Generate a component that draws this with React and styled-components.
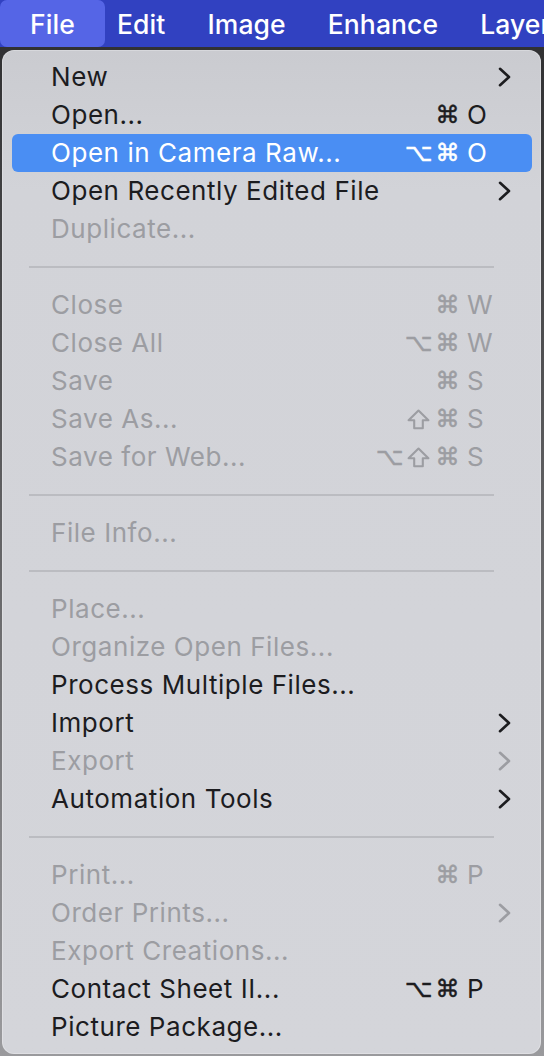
import React from "react";
import styled, { createGlobalStyle, css } from "styled-components";

const GlobalStyle = createGlobalStyle`
  html, body { margin: 0; padding: 0; }
  body {
    background: #3a3a3c;
    font-family: Inter, "Noto Sans", "DejaVu Sans", sans-serif;
    -webkit-font-smoothing: antialiased;
  }
  #root { width: 544px; height: 1056px; overflow: hidden; }
`;

const Screen = styled.div`
  width: 544px;
  height: 1056px;
  display: flex;
  flex-direction: column;
  background: linear-gradient(#2c2c2e 0, #4a4a4c 300px, #9a9a9d 1056px);
`;

const MenuBar = styled.div`
  height: 47px;
  flex: none;
  display: flex;
  align-items: stretch;
  background: #3141c1;
  overflow: hidden;
  white-space: nowrap;
`;

const MenuTitle = styled.div`
  display: flex;
  align-items: center;
  padding: 0 21px;
  color: #ffffff;
  font-size: 26.5px;
  font-weight: 500;
  letter-spacing: 0.1px;
  ${(p) =>
    p.$active &&
    css`
      padding: 0 30px;
      margin-right: -9px;
      background: #5565e6;
      border-radius: 7px;
    `}
`;

const Menu = styled.div`
  margin: 3px 3px 0 2px;
  flex: none;
  padding: 8px 0;
  border-radius: 12px;
  background: linear-gradient(#cacbd0 0, #d2d3d8 140px, #d4d5da 100%);
  box-shadow: inset 0 0 0 1px rgba(255, 255, 255, 0.25);
  display: flex;
  flex-direction: column;
`;

const Row = styled.div`
  height: 38px;
  flex: none;
  margin: 0 9px 0 10px;
  padding: 0 21px 0 39px;
  display: flex;
  align-items: center;
  border-radius: 6px;
  font-size: 26px;
  line-height: 38px;
  white-space: nowrap;
  color: ${(p) => (p.$selected ? "#ffffff" : p.$disabled ? "#9c9da2" : "#1c1c1f")};
  background: ${(p) => (p.$selected ? "#4a8ef3" : "transparent")};
`;

const Label = styled.span`
  flex: 1;
  letter-spacing: 0.55px;
`;

const Mods = styled.span`
  display: flex;
  justify-content: flex-end;
  align-items: center;
`;

const ModKey = styled.span`
  width: 29px;
  height: 38px;
  display: flex;
  align-items: center;
  justify-content: center;
  font-family: "DejaVu Sans", sans-serif;
  font-size: 24px;
  -webkit-text-stroke: 0.5px currentColor;
`;

const Key = styled.span`
  width: 30px;
  margin-left: 5px;
  text-align: left;
`;

const ArrowCell = styled.span`
  width: 14px;
  height: 38px;
  display: flex;
  align-items: center;
  justify-content: flex-end;
`;

const SeparatorBox = styled.div`
  height: 38px;
  flex: none;
  display: flex;
  align-items: center;
  padding: 0 47px 0 27px;
`;

const SeparatorLine = styled.div`
  flex: 1;
  height: 2px;
  background: #bbbcc1;
`;

const Chevron = ({ color }) => (
  <svg width="13" height="20" viewBox="0 0 13 20">
    <path
      d="M2 1.8 L11 10 L2 18.2"
      fill="none"
      stroke={color}
      strokeWidth="2.6"
      strokeLinecap="round"
      strokeLinejoin="round"
    />
  </svg>
);

const ShiftIcon = () => (
  <svg width="23" height="21" viewBox="0 0 23 21" style={{ marginTop: 1 }}>
    <path
      d="M11.5 1.6 L21.4 11.2 L15.8 11.2 L15.8 19.2 L7.2 19.2 L7.2 11.2 L1.6 11.2 Z"
      fill="none"
      stroke="currentColor"
      strokeWidth="2.1"
      strokeLinejoin="round"
    />
  </svg>
);

const SEP = { sep: true };

const items = [
  { label: "New", sub: true },
  { label: "Open...", mods: ["⌘"], key: "O" },
  { label: "Open in Camera Raw...", mods: ["⌥", "⌘"], key: "O", selected: true },
  { label: "Open Recently Edited File", sub: true },
  { label: "Duplicate...", disabled: true },
  SEP,
  { label: "Close", mods: ["⌘"], key: "W", disabled: true },
  { label: "Close All", mods: ["⌥", "⌘"], key: "W", disabled: true },
  { label: "Save", mods: ["⌘"], key: "S", disabled: true },
  { label: "Save As...", mods: ["⇧", "⌘"], key: "S", disabled: true },
  { label: "Save for Web...", mods: ["⌥", "⇧", "⌘"], key: "S", disabled: true },
  SEP,
  { label: "File Info...", disabled: true },
  SEP,
  { label: "Place...", disabled: true },
  { label: "Organize Open Files...", disabled: true },
  { label: "Process Multiple Files..." },
  { label: "Import", sub: true },
  { label: "Export", sub: true, disabled: true },
  { label: "Automation Tools", sub: true },
  SEP,
  { label: "Print...", mods: ["⌘"], key: "P", disabled: true },
  { label: "Order Prints...", sub: true, disabled: true },
  { label: "Export Creations...", disabled: true },
  { label: "Contact Sheet II...", mods: ["⌥", "⌘"], key: "P" },
  { label: "Picture Package..." },
];

const titles = ["File", "Edit", "Image", "Enhance", "Layer"];

export default function App() {
  return (
    <>
      <GlobalStyle />
      <Screen>
        <MenuBar>
          {titles.map((t, i) => (
            <MenuTitle key={t} $active={i === 0}>
              {t}
            </MenuTitle>
          ))}
        </MenuBar>
        <Menu>
          {items.map((it, i) =>
            it.sep ? (
              <SeparatorBox key={i}>
                <SeparatorLine />
              </SeparatorBox>
            ) : (
              <Row key={i} $disabled={it.disabled} $selected={it.selected}>
                <Label>{it.label}</Label>
                <Mods>
                  {(it.mods || []).map((m, j) => (
                    <ModKey key={j}>{m === "⇧" ? <ShiftIcon /> : m}</ModKey>
                  ))}
                </Mods>
                <Key>{it.key || ""}</Key>
                <ArrowCell>
                  {it.sub && (
                    <Chevron
                      color={it.selected ? "#ffffff" : it.disabled ? "#9c9da2" : "#1c1c1f"}
                    />
                  )}
                </ArrowCell>
              </Row>
            )
          )}
        </Menu>
      </Screen>
    </>
  );
}
